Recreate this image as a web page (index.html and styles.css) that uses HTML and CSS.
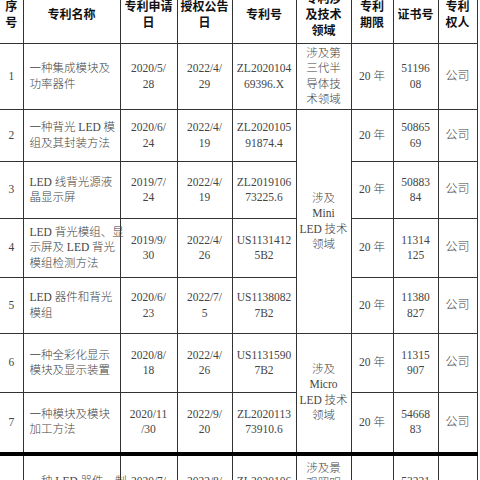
FILE: index.html
```html
<!DOCTYPE html>
<html lang="zh-CN">
<head>
<meta charset="utf-8">
<title>专利列表</title>
<link rel="stylesheet" href="styles.css">
</head>
<body>
<table class="patents">
  <colgroup>
    <col class="c-no"><col class="c-name"><col class="c-apply"><col class="c-grant"><col class="c-num"><col class="c-field"><col class="c-term"><col class="c-cert"><col class="c-owner">
  </colgroup>
  <thead>
    <tr class="h-head">
      <th>序<br>号</th>
      <th>专利名称</th>
      <th>专利申请<br>日</th>
      <th>授权公告<br>日</th>
      <th>专利号</th>
      <th>专利涉<br>及技术<br>领域</th>
      <th>专利<br>期限</th>
      <th>证书号</th>
      <th>专利<br>权人</th>
    </tr>
  </thead>
  <tbody>
    <tr class="h66">
      <td>1</td>
      <td class="name">一种集成模块及<br>功率器件</td>
      <td>2020/5/<br>28</td>
      <td>2022/4/<br>29</td>
      <td>ZL2020104<br>69396.X</td>
      <td>涉及第<br>三代半<br>导体技<br>术领域</td>
      <td>20 年</td>
      <td>51196<br>08</td>
      <td class="owner">公司</td>
    </tr>
    <tr class="h52">
      <td>2</td>
      <td class="name">一种背光 LED 模<br>组及其封装方法</td>
      <td>2020/6/<br>24</td>
      <td>2022/4/<br>19</td>
      <td>ZL2020105<br>91874.4</td>
      <td rowspan="4">涉及<br>Mini<br>LED 技术<br>领域</td>
      <td>20 年</td>
      <td>50865<br>69</td>
      <td class="owner">公司</td>
    </tr>
    <tr class="h57">
      <td>3</td>
      <td class="name">LED 线背光源液<br>晶显示屏</td>
      <td>2019/7/<br>24</td>
      <td>2022/4/<br>19</td>
      <td>ZL2019106<br>73225.6</td>
      <td>20 年</td>
      <td>50883<br>84</td>
      <td class="owner">公司</td>
    </tr>
    <tr class="h59">
      <td>4</td>
      <td class="name">LED 背光模组、显<br>示屏及 LED 背光<br>模组检测方法</td>
      <td>2019/9/<br>30</td>
      <td>2022/4/<br>26</td>
      <td>US1131412<br>5B2</td>
      <td>20 年</td>
      <td>11314<br>125</td>
      <td class="owner">公司</td>
    </tr>
    <tr class="h56">
      <td>5</td>
      <td class="name">LED 器件和背光<br>模组</td>
      <td>2020/6/<br>23</td>
      <td>2022/7/<br>5</td>
      <td>US1138082<br>7B2</td>
      <td>20 年</td>
      <td>11380<br>827</td>
      <td class="owner">公司</td>
    </tr>
    <tr class="h59">
      <td>6</td>
      <td class="name">一种全彩化显示<br>模块及显示装置</td>
      <td>2020/8/<br>18</td>
      <td>2022/4/<br>26</td>
      <td>US1131590<br>7B2</td>
      <td rowspan="2">涉及<br>Micro<br>LED 技术<br>领域</td>
      <td>20 年</td>
      <td>11315<br>907</td>
      <td class="owner">公司</td>
    </tr>
    <tr class="h61 page-end">
      <td>7</td>
      <td class="name">一种模块及模块<br>加工方法</td>
      <td>2020/11<br>/30</td>
      <td>2022/9/<br>20</td>
      <td>ZL2020113<br>73910.6</td>
      <td>20 年</td>
      <td>54668<br>83</td>
      <td class="owner">公司</td>
    </tr>
    <tr class="h70 page-start">
      <td>8</td>
      <td class="name">一种 LED 器件、制<br>作方法及显示屏</td>
      <td>2020/7/<br>14</td>
      <td>2022/8/<br>16</td>
      <td>ZL2020106<br>75261.3</td>
      <td class="field-top">涉及景<br>观照明<br>技术领<br>域</td>
      <td>20 年</td>
      <td>53221<br>47</td>
      <td class="owner">公司</td>
    </tr>
  </tbody>
</table>
</body>
</html>
```

FILE: styles.css
```css
html, body {
  margin: 0;
  padding: 0;
  background: #ffffff;
  overflow: hidden;
}

.patents {
  margin-top: -17px;
  width: 477px;
  table-layout: fixed;
  border-collapse: collapse;
  font-family: "Liberation Serif", "Noto Sans CJK SC", serif;
  font-size: 11.5px;
  font-weight: 300;
  line-height: 15.5px;
  color: #444444;
}

.c-no { width: 23px; }
.c-name { width: 97px; }
.c-apply { width: 57px; }
.c-grant { width: 55px; }
.c-num { width: 64px; }
.c-field { width: 55px; }
.c-term { width: 42px; }
.c-cert { width: 45px; }
.c-owner { width: 39px; }

.patents th,
.patents td {
  border: 1px solid #333333;
  padding: 0;
  text-align: center;
  vertical-align: middle;
  white-space: nowrap;
  overflow: visible;
}

.patents tr > :first-child { border-left: none; }

.patents th {
  font-family: "Noto Sans CJK SC", sans-serif;
  font-weight: 700;
  font-size: 12px;
  line-height: 16px;
  color: #111111;
}

.patents td.name {
  text-align: left;
  padding-left: 6px;
}

.patents td.owner {
  font-size: 12px;
}

.patents td.field-top {
  vertical-align: top;
  padding-top: 5px;
}

.h-head { height: 60px; }
.h66 { height: 66px; }
.h52 { height: 52px; }
.h57 { height: 57px; }
.h59 { height: 59px; }
.h56 { height: 56px; }
.h61 { height: 61px; }
.h70 { height: 70px; }

.page-end td { border-bottom: 4px solid #000000; }
.page-start td { border-top: 4px solid #000000; }
```
